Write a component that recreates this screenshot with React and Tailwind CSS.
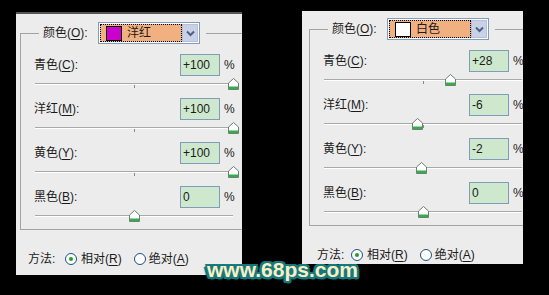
import React from "react";

const font = "font-['Liberation_Sans','Noto_Sans_CJK_SC',sans-serif]";

const U = ({ children }) => <span className="underline underline-offset-2">{children}</span>;

const Thumb = ({ value }) => {
  // track is 198px wide, -100..100
  const pos = ((value + 100) / 200) * 198;
  return (
    <svg
      width="11"
      height="12"
      viewBox="0 0 11 12"
      className="absolute top-[2px]"
      style={{ left: 14 + pos - 5.5 }}
    >
      <path d="M0.5 5 L5.5 0.5 L10.5 5 L10.5 11.5 L0.5 11.5 Z" fill="#ffffff" stroke="#6f7f74" />
      <rect x="1" y="8.5" width="9" height="2.5" fill="#2fae4a" />
    </svg>
  );
};

const Row = ({ name, letter, value }) => {
  const shown = value > 0 ? `+${value}` : `${value}`;
  return (
    <div>
      <div className="flex items-center h-[22px]">
        <div className="w-[159px] pl-[13px] whitespace-nowrap">
          {name}(<U>{letter}</U>):
        </div>
        <div className="w-[40px] h-[22px] border border-[#7f9db9] bg-[#cde8cd] pl-[2px] flex items-center">
          {shown}
        </div>
        <div className="ml-[4px]">%</div>
      </div>
      <div className="relative h-[22px] pt-[7px]">
        <div className="ml-[14px] w-[198px] h-[2px] border-t border-[#a9a9a9] bg-white" />
        <div className="absolute left-[113px] top-[9px] w-px h-[3px] bg-[#8a8a8a]" />
        <Thumb value={value} />
      </div>
    </div>
  );
};

const Radio = ({ checked }) => (
  <div className="w-[12px] h-[12px] rounded-full border border-[#1c5180] bg-white flex items-center justify-center">
    {checked && <div className="w-[4px] h-[4px] rounded-full bg-[#21a121]" />}
  </div>
);

const Panel = ({ className, groupClass, methodPad, swatch, colorName, values }) => (
  <div className={`relative overflow-hidden bg-[#ececec] text-[12px] text-[#1b1b1b] ${font} ${className}`}>
    <div className={`w-[260px] h-[197px] border border-r-0 border-[#a3a3a3] ${groupClass}`}>
      <div className="-mt-[12px] ml-[18px] w-fit flex items-center bg-[#ececec] pl-[4px] pr-[6px]">
        <div className="w-[55px] whitespace-nowrap">
          颜色(<U>O</U>):
        </div>
        <div className="w-[102px] h-[22px] border border-[#7f9db9] bg-white p-[1px] flex">
          <div className="w-[82px] h-full bg-[#f0b080] border border-dotted border-black flex items-center pl-[5px]">
            <div className={`w-[16px] h-[15px] border border-black ${swatch}`} />
            <div className="ml-[5px]">{colorName}</div>
          </div>
          <div className="ml-auto w-[16px] h-full border border-[#b4c0da] bg-[#c9d1e6] flex items-center justify-center">
            <svg width="9" height="7" viewBox="0 0 9 7">
              <path d="M1 1.5 L4.5 5 L8 1.5" fill="none" stroke="#4d6185" strokeWidth="2" />
            </svg>
          </div>
        </div>
      </div>
      <div className="pt-[10px]">
        <Row name="青色" letter="C" value={values[0]} />
        <Row name="洋红" letter="M" value={values[1]} />
        <Row name="黄色" letter="Y" value={values[2]} />
        <Row name="黑色" letter="B" value={values[3]} />
      </div>
    </div>
    <div className="mt-[21px] flex items-center h-[16px] whitespace-nowrap">
      <div className={`w-[49px] ${methodPad}`}>方法:</div>
      <Radio checked />
      <div className="ml-[4px]">
        相对(<U>R</U>)
      </div>
      <div className="ml-[12px]">
        <Radio />
      </div>
      <div className="ml-[3px]">
        绝对(<U>A</U>)
      </div>
    </div>
  </div>
);

export default function App() {
  return (
    <div className="relative w-[549px] h-[295px] bg-black overflow-hidden flex items-start pl-[16px] pt-[11px]">
      <Panel
        className="mt-[1px] w-[226px] h-[263px] border-t-2 border-[#555555] pt-[19px]"
        groupClass="ml-[4px]"
        methodPad="pl-[12px]"
        swatch="bg-[#cc00cc]"
        colorName="洋红"
        values={[100, 100, 100, 0]}
      />
      <Panel
        className="ml-[60px] w-[221px] h-[253px] pt-[18px]"
        groupClass="ml-[7px]"
        methodPad="pl-[15px]"
        swatch="bg-white"
        colorName="白色"
        values={[28, -6, -2, 0]}
      />
      <div className="absolute left-[207px] top-[259px] font-['Liberation_Sans',sans-serif] font-bold text-[21px] leading-none text-[#f8efc6] [text-shadow:2px_0_0_#17797c,-2px_0_0_#17797c,0_2px_0_#17797c,0_-2px_0_#17797c,2px_2px_0_#17797c,-2px_2px_0_#17797c,2px_-2px_0_#17797c,-2px_-2px_0_#17797c,3px_1px_1px_#0d4a4c,-3px_1px_1px_#0d4a4c,1px_3px_1px_#0d4a4c]">
        www.68ps.com
      </div>
    </div>
  );
}
